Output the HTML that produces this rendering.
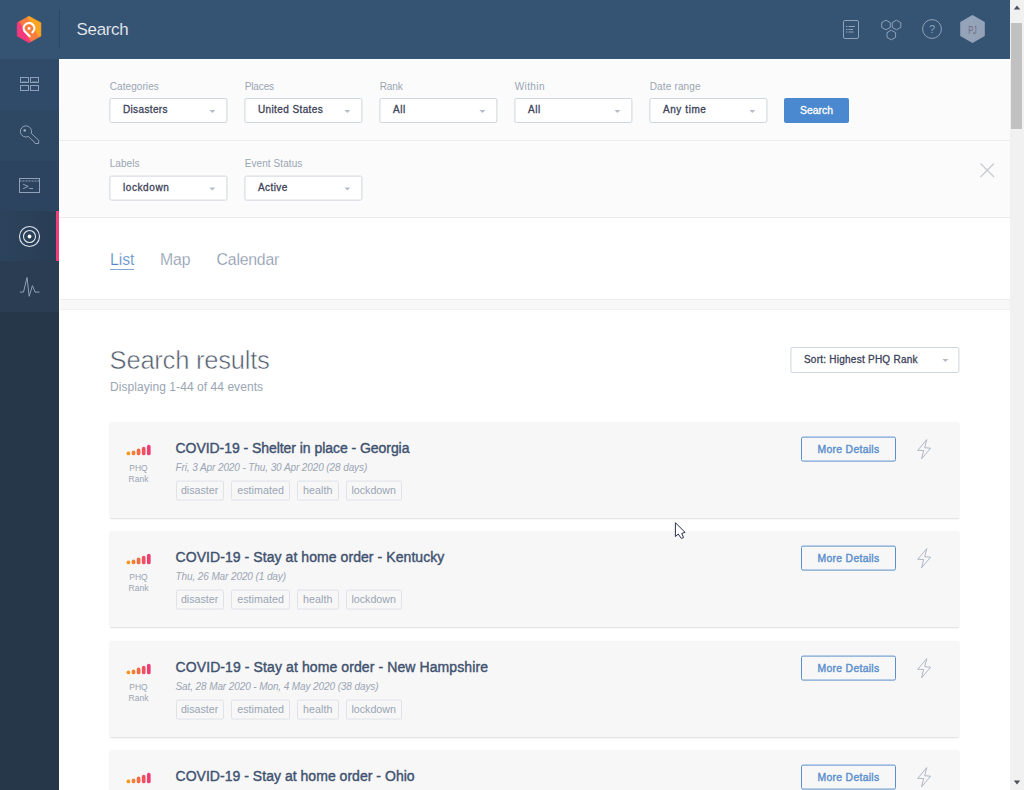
<!DOCTYPE html>
<html lang="en">
<head>
<meta charset="utf-8">
<title>Search</title>
<style>
*{box-sizing:border-box;margin:0;padding:0}
html,body{width:1024px;height:790px;overflow:hidden;background:#fff}
body{font-family:"Liberation Sans","DejaVu Sans",sans-serif;color:#3b4a63;position:relative}
.abs{position:absolute}
#header{position:absolute;left:0;top:0;width:1010px;height:59px;background:#355373}
#header .sep{position:absolute;left:59px;top:10px;width:1px;height:38px;background:#2d4763}
#header h1{position:absolute;left:76.6px;top:17.7px;font-size:16.9px;letter-spacing:-.3px;font-weight:400;color:#eef1f5;-webkit-text-stroke:.15px #355373;line-height:24px}
#sidebar{position:absolute;left:0;top:59px;width:59px;height:731px;background:#27374a}
#sidebar .it{position:absolute;left:0;width:59px;height:51px}
#main{position:absolute;left:59px;top:59px;width:951px;height:731px;background:#fff;overflow:hidden}
#filters{position:absolute;left:0;top:0;width:951px;height:159px;background:#fbfbfb;box-shadow:inset 0 2px 0 #fff}
#filters .line{position:absolute;left:0;width:951px;height:1px;background:#ececec}
.lbl{transform:translate(.7px,.9px);position:absolute;font-size:10px;letter-spacing:.08px;color:#9aa5b3;line-height:14px;white-space:nowrap}
.sel{transform:translateX(.4px);position:absolute;width:118px;height:25px;background:#fff;border:1px solid #cfd6de;border-radius:2px}
.sel span{position:absolute;left:12.5px;top:4px;font-size:10px;letter-spacing:0;font-weight:400;-webkit-text-stroke:.3px #3c4258;color:#3c4258;line-height:14px;white-space:nowrap}
.sel i{position:absolute;right:11px;top:11px;width:0;height:0;border-left:3px solid transparent;border-right:3px solid transparent;border-top:3px solid #b5bcc6}

.btn{position:absolute;width:65px;height:25px;background:#4a89cf;border-radius:2px;color:#fff;font-size:10.4px;font-weight:400;-webkit-text-stroke:.3px #fff;line-height:25px;text-align:center}
#tabs{position:absolute;left:0;top:159px;width:951px;height:81px;background:#fff}
.tab{position:absolute;top:32.1px;font-size:15.8px;letter-spacing:-.08px;line-height:19px;color:#8794aa;-webkit-text-stroke:.25px #fff;white-space:nowrap}
.tab.act{color:#4c85c8;border-bottom:1px solid #7fa8d8}
#band{position:absolute;left:1px;top:240px;width:950px;height:11px;background:#f8f8f9;border-top:1px solid #ededee;border-bottom:1px solid #f0f0f1}
#rt{position:absolute;left:50.6px;top:285px;font-size:25.6px;letter-spacing:-.26px;font-weight:400;line-height:32px;color:#525c6c;-webkit-text-stroke:.55px #fff;white-space:nowrap}
#rs{position:absolute;left:51px;top:319.6px;letter-spacing:.06px;font-size:12px;line-height:16px;color:#9aa5b3;white-space:nowrap}
.card{position:absolute;left:51px;width:849px;height:96px;background:#f7f7f8;border-radius:1px;box-shadow:0 1px 1.5px rgba(40,55,80,.17)}
.phq{position:absolute;left:8.5px;top:41px;width:40px;text-align:center;font-size:8.5px;line-height:11px;color:#9aa5b3}
.ttl{position:absolute;left:65.5px;top:17px;font-size:14px;letter-spacing:0;font-weight:400;-webkit-text-stroke:.4px #3f526f;line-height:18px;color:#3f526f;white-space:nowrap}
.dt{position:absolute;left:65.5px;top:38.6px;font-size:10px;letter-spacing:-.1px;font-style:italic;line-height:13px;color:#9aa5b3;white-space:nowrap}
.tags{position:absolute;left:65.5px;top:58px;transform:translateY(.6px);white-space:nowrap;font-size:0}
.tags span{display:inline-block;height:20px;line-height:16.6px;vertical-align:top;border:1px solid #dfe2e7;border-radius:2px;padding:0;text-align:center;margin-right:7.2px;font-size:10.7px;color:#9aa5b3}
.tags span:nth-child(1){width:48.3px;margin-right:7.6px}.tags span:nth-child(2){width:58.4px;letter-spacing:.06px}.tags span:nth-child(3){width:41.6px;letter-spacing:.06px}.tags span:nth-child(4){width:55.9px}
.md{letter-spacing:.3px;transform:translateY(-.4px);position:absolute;left:691px;top:15px;width:95px;height:24.5px;border:1px solid #5a8fcc;border-radius:2px;color:#5a8fcc;font-size:10.4px;font-weight:400;-webkit-text-stroke:.4px #5a8fcc;line-height:23px;text-align:center}
#scroll{position:absolute;left:1010px;top:0;width:14px;height:790px;background:#f1f1f1}
#scroll .thumb{position:absolute;left:1px;top:23px;width:11px;height:106px;background:#c1c1c1}
</style>
</head>
<body>
<div id="header">
  <svg class="abs" style="left:10px;top:10px" width="40" height="40" viewBox="0 0 40 40">
    <defs><linearGradient id="lg" gradientUnits="userSpaceOnUse" x1="7" y1="26" x2="31" y2="12"><stop offset="0" stop-color="#f5397b"/><stop offset="0.29" stop-color="#f5397b"/><stop offset="0.37" stop-color="#f67d3f"/><stop offset="0.62" stop-color="#f67d3f"/><stop offset="0.70" stop-color="#fba422"/><stop offset="1" stop-color="#fba422"/></linearGradient></defs>
    <path d="M19 6.2 L30.9 12.8 V26.1 L19 32.7 L7.2 26.1 V12.8 Z" fill="url(#lg)" stroke="url(#lg)" stroke-width=".6" stroke-linejoin="round"/>
    <path d="M22.4 22.36 A5.3 5.3 0 1 0 14.41 20.95 L19.6 26.2" fill="none" stroke="#fff" stroke-width="2.2" stroke-linecap="round" stroke-linejoin="round"/>
    <rect x="17.8" y="17.2" width="2.5" height="2.5" fill="#fff"/>
  </svg>
  <div class="sep"></div>
  <h1>Search</h1>
  <svg class="abs" style="left:842px;top:19px" width="18" height="21" viewBox="0 0 18 21" fill="none" stroke="#8fa1b8" stroke-width="1"><rect x="1.5" y="1.5" width="15" height="18" rx="1.5"/><path d="M4 7.5 H5.5 M6.5 7.5 H13 M4 10.5 H5.5 M6.5 10.5 H11 M4 13 H5.5 M6.5 13 H11.5"/></svg>
  <svg class="abs" style="left:880px;top:19px" width="22" height="22" viewBox="0 0 22 22" fill="none" stroke="#8fa1b8" stroke-width="1" stroke-linejoin="round"><path d="M6 1.2 L10.3 3.6 V8.4 L6 10.8 L1.7 8.4 V3.6 Z"/><path d="M16.5 1.2 L20.8 3.6 V8.4 L16.5 10.8 L12.2 8.4 V3.6 Z"/><path d="M11.3 11.2 L15.6 13.6 V18.4 L11.3 20.8 L7 18.4 V13.6 Z"/></svg>
  <svg class="abs" style="left:920px;top:17px" width="24" height="24" viewBox="0 0 24 24" fill="none" stroke="#8fa1b8" stroke-width="1"><circle cx="12" cy="12" r="9.4"/></svg>
  <div class="abs" style="left:920px;top:20px;width:24px;text-align:center;font-size:11px;line-height:18px;color:#8fa1b8">?</div>
  <svg class="abs" style="left:958px;top:13px" width="29" height="32" viewBox="0 0 29 32"><path d="M14.5 3 L25.8 9.5 V22.5 L14.5 29 L3.2 22.5 V9.5 Z" fill="#95a3b9" stroke="#95a3b9" stroke-width="2" stroke-linejoin="round"/></svg>
  <div class="abs" style="left:958px;top:22.2px;width:29px;text-align:center;font-size:10.5px;line-height:16px;color:#6f6a7e;transform:scaleX(.7)">PJ</div>
</div>
<div id="sidebar">
  <div class="it" style="top:0;background:#304b69">
    <svg class="abs" style="left:19px;top:17px" width="22" height="16" viewBox="0 0 22 16" fill="none" stroke="#8fa1b8" stroke-width="1"><rect x="1.5" y="1.5" width="8" height="5"/><rect x="11.5" y="1.5" width="8" height="5"/><rect x="1.5" y="9.5" width="8" height="5"/><rect x="11.5" y="9.5" width="8" height="5"/><path d="M3 5.7 H8 M13 5.7 H18" stroke-width=".8" opacity=".7"/></svg>
  </div>
  <div class="it" style="top:51px;background:#2e4763">
    <svg class="abs" style="left:18px;top:14px" width="24" height="24" viewBox="0 0 24 24" fill="none" stroke="#8fa1b8" stroke-width="1"><path d="M10.32 12.48 A5.6 5.6 0 1 1 13.21 9.32 L20.7 16.3 V19.5 H17.1 L15.2 16.7 L13.8 15.9 Z" stroke-linejoin="round"/><circle cx="6.7" cy="6.4" r="1.2" fill="#a9b7c9" stroke="none"/></svg>
  </div>
  <div class="it" style="top:102px;background:#2c445f">
    <svg class="abs" style="left:18px;top:16px" width="24" height="18" viewBox="0 0 24 18" fill="none" stroke="#8fa1b8" stroke-width="1"><rect x="1.5" y="1.5" width="20" height="14"/><path d="M1.5 4 H21.5" stroke-dasharray="2 1"/><path d="M5.1 7.2 L10.2 9.4 L5.1 11.7 M11.2 11.5 H15"/></svg>
  </div>
  <div class="it" style="top:152px;height:50px;background:linear-gradient(90deg,#2c435d,#293d54)">
    <svg class="abs" style="left:18px;top:13.5px" width="23" height="23" viewBox="0 0 23 23" fill="none" stroke="#e3e8ef" stroke-width="1.1"><circle cx="11.5" cy="11.5" r="10"/><circle cx="11.5" cy="11.5" r="6"/><circle cx="11.5" cy="11.5" r="1.9" fill="#fff" stroke="none"/></svg>
    <div class="abs" style="left:55.5px;top:0;width:3.5px;height:50px;background:#f0407a"></div>
  </div>
  <div class="it" style="top:202px;background:#2a3d53">
    <svg class="abs" style="left:18px;top:15px" width="24" height="22" viewBox="0 0 24 22" fill="none" stroke="#8fa1b8" stroke-width="1" stroke-linejoin="round"><path d="M1.9 16.1 H5.5 L9 1.5 L11.2 20.3 L14.4 9.6 L17.1 16.1 H21.5"/></svg>
  </div>
</div>
<div id="main">
<div id="filters">
<div class="lbl" style="left:50px;top:20px">Categories</div>
<div class="sel" style="left:50px;top:39px;width:118px"><span style="letter-spacing:0.37px">Disasters</span><i></i></div>
<div class="lbl" style="left:185px;top:20px;letter-spacing:-0.12px">Places</div>
<div class="sel" style="left:185px;top:39px;width:118px"><span style="letter-spacing:0.4px">United States</span><i></i></div>
<div class="lbl" style="left:320px;top:20px;letter-spacing:-0.1px">Rank</div>
<div class="sel" style="left:320px;top:39px;width:118px"><span style="letter-spacing:0.6px">All</span><i></i></div>
<div class="lbl" style="left:455px;top:20px;letter-spacing:0.41px">Within</div>
<div class="sel" style="left:455px;top:39px;width:118px"><span style="letter-spacing:0.6px">All</span><i></i></div>
<div class="lbl" style="left:590px;top:20px;letter-spacing:0.16px">Date range</div>
<div class="sel" style="left:590px;top:39px;width:118px"><span style="letter-spacing:0.59px">Any time</span><i></i></div>
<div class="btn" style="left:725px;top:39px">Search</div>
<div class="line" style="top:81px"></div>
<div class="lbl" style="left:50px;top:97px;transform:translate(.7px,1px)">Labels</div>
<div class="sel" style="left:50px;top:116px;width:118px;transform:translate(.4px,.6px)"><span style="letter-spacing:0.6px">lockdown</span><i></i></div>
<div class="lbl" style="left:185px;top:97px;transform:translate(.7px,1px)">Event Status</div>
<div class="sel" style="left:185px;top:116px;width:118px;transform:translate(.4px,.6px)"><span style="letter-spacing:0.43px">Active</span><i></i></div>
<svg class="abs" style="left:920px;top:103px" width="16" height="16" viewBox="0 0 16 16" stroke="#c6cad1" stroke-width="1.2" fill="none"><path d="M1.5 1.5 L15 15 M15 1.5 L1.5 15"/></svg>
<div class="line" style="top:158px"></div>
</div>
<div id="tabs">
  <span class="tab act" style="left:51px">List</span>
  <span class="tab" style="left:101px">Map</span>
  <span class="tab" style="left:157.6px;letter-spacing:-.2px">Calendar</span>
</div>
<div id="band"></div>
<h2 id="rt">Search results</h2>
<div id="rs">Displaying 1-44 of 44 events</div>
<div class="sel" style="left:731px;top:288px;width:169px;height:25.5px"><span style="letter-spacing:.25px;top:5px">Sort: Highest PHQ Rank</span><i style="right:10px;top:11px"></i></div>
<div class="card" style="top:363px">
  <svg class="abs" style="left:16.3px;top:22px" width="27" height="13" viewBox="0 0 27 13" stroke-width="3.7" stroke-linecap="round" fill="none"><path d="M2.4 9.4 V9.5" stroke="#f7931e"/><path d="M7.5 8.4 V9.5" stroke="#f6802f"/><path d="M12.6 6.4 V9.5" stroke="#f46a45"/><path d="M17.7 4.7 V9.5" stroke="#f1535e"/><path d="M22.8 2.6 V9.5" stroke="#ee3f75"/></svg>
  <div class="phq">PHQ<br>Rank</div>
  <div class="ttl" style="letter-spacing:-0.05px">COVID-19 - Shelter in place - Georgia</div>
  <div class="dt">Fri, 3 Apr 2020 - Thu, 30 Apr 2020 (28 days)</div>
  <div class="tags"><span>disaster</span><span>estimated</span><span>health</span><span>lockdown</span></div>
  <div class="md">More Details</div>
  <svg class="abs" style="left:806px;top:16px" width="17" height="23" viewBox="0 0 17 23" fill="none" stroke="#aeb7c7" stroke-width="1" stroke-linejoin="round"><path d="M10.8 1.6 L1.7 12.3 L7.7 12.5 L5.5 20.9 L14.6 10.2 L8.7 9.7 Z"/></svg>
</div>
<div class="card" style="top:472px">
  <svg class="abs" style="left:16.3px;top:22px" width="27" height="13" viewBox="0 0 27 13" stroke-width="3.7" stroke-linecap="round" fill="none"><path d="M2.4 9.4 V9.5" stroke="#f7931e"/><path d="M7.5 8.4 V9.5" stroke="#f6802f"/><path d="M12.6 6.4 V9.5" stroke="#f46a45"/><path d="M17.7 4.7 V9.5" stroke="#f1535e"/><path d="M22.8 2.6 V9.5" stroke="#ee3f75"/></svg>
  <div class="phq">PHQ<br>Rank</div>
  <div class="ttl" style="letter-spacing:0.07px">COVID-19 - Stay at home order - Kentucky</div>
  <div class="dt">Thu, 26 Mar 2020 (1 day)</div>
  <div class="tags"><span>disaster</span><span>estimated</span><span>health</span><span>lockdown</span></div>
  <div class="md">More Details</div>
  <svg class="abs" style="left:806px;top:16px" width="17" height="23" viewBox="0 0 17 23" fill="none" stroke="#aeb7c7" stroke-width="1" stroke-linejoin="round"><path d="M10.8 1.6 L1.7 12.3 L7.7 12.5 L5.5 20.9 L14.6 10.2 L8.7 9.7 Z"/></svg>
</div>
<div class="card" style="top:582px">
  <svg class="abs" style="left:16.3px;top:22px" width="27" height="13" viewBox="0 0 27 13" stroke-width="3.7" stroke-linecap="round" fill="none"><path d="M2.4 9.4 V9.5" stroke="#f7931e"/><path d="M7.5 8.4 V9.5" stroke="#f6802f"/><path d="M12.6 6.4 V9.5" stroke="#f46a45"/><path d="M17.7 4.7 V9.5" stroke="#f1535e"/><path d="M22.8 2.6 V9.5" stroke="#ee3f75"/></svg>
  <div class="phq">PHQ<br>Rank</div>
  <div class="ttl" style="letter-spacing:0.1px">COVID-19 - Stay at home order - New Hampshire</div>
  <div class="dt">Sat, 28 Mar 2020 - Mon, 4 May 2020 (38 days)</div>
  <div class="tags"><span>disaster</span><span>estimated</span><span>health</span><span>lockdown</span></div>
  <div class="md">More Details</div>
  <svg class="abs" style="left:806px;top:16px" width="17" height="23" viewBox="0 0 17 23" fill="none" stroke="#aeb7c7" stroke-width="1" stroke-linejoin="round"><path d="M10.8 1.6 L1.7 12.3 L7.7 12.5 L5.5 20.9 L14.6 10.2 L8.7 9.7 Z"/></svg>
</div>
<div class="card" style="top:691px">
  <svg class="abs" style="left:16.3px;top:22px" width="27" height="13" viewBox="0 0 27 13" stroke-width="3.7" stroke-linecap="round" fill="none"><path d="M2.4 9.4 V9.5" stroke="#f7931e"/><path d="M7.5 8.4 V9.5" stroke="#f6802f"/><path d="M12.6 6.4 V9.5" stroke="#f46a45"/><path d="M17.7 4.7 V9.5" stroke="#f1535e"/><path d="M22.8 2.6 V9.5" stroke="#ee3f75"/></svg>
  <div class="phq">PHQ<br>Rank</div>
  <div class="ttl" style="letter-spacing:0.03px">COVID-19 - Stay at home order - Ohio</div>
  <div class="dt">Mon, 23 Mar 2020 - Fri, 1 May 2020 (40 days)</div>
  <div class="tags"><span>disaster</span><span>estimated</span><span>health</span><span>lockdown</span></div>
  <div class="md">More Details</div>
  <svg class="abs" style="left:806px;top:16px" width="17" height="23" viewBox="0 0 17 23" fill="none" stroke="#aeb7c7" stroke-width="1" stroke-linejoin="round"><path d="M10.8 1.6 L1.7 12.3 L7.7 12.5 L5.5 20.9 L14.6 10.2 L8.7 9.7 Z"/></svg>
</div>
</div>
<div id="scroll"><div class="thumb"></div><svg class="abs" style="left:0;top:0" width="14" height="790" viewBox="0 0 14 790" fill="#4a4f58"><path d="M3.8 9.6 H10.2 L7 5.6 Z"/><path d="M3.8 780.4 H10.2 L7 784.4 Z"/></svg></div>
<svg class="abs" style="left:670px;top:518px" width="20" height="24" viewBox="0 0 20 24"><path d="M5.4 4.7 V18.6 L8.2 16 L11.3 20.4 L13.5 19.6 L11.8 15.5 L15 14.3 Z" fill="#fff" stroke="#24334a" stroke-width="1" stroke-linejoin="miter"/></svg>
</body>
</html>
